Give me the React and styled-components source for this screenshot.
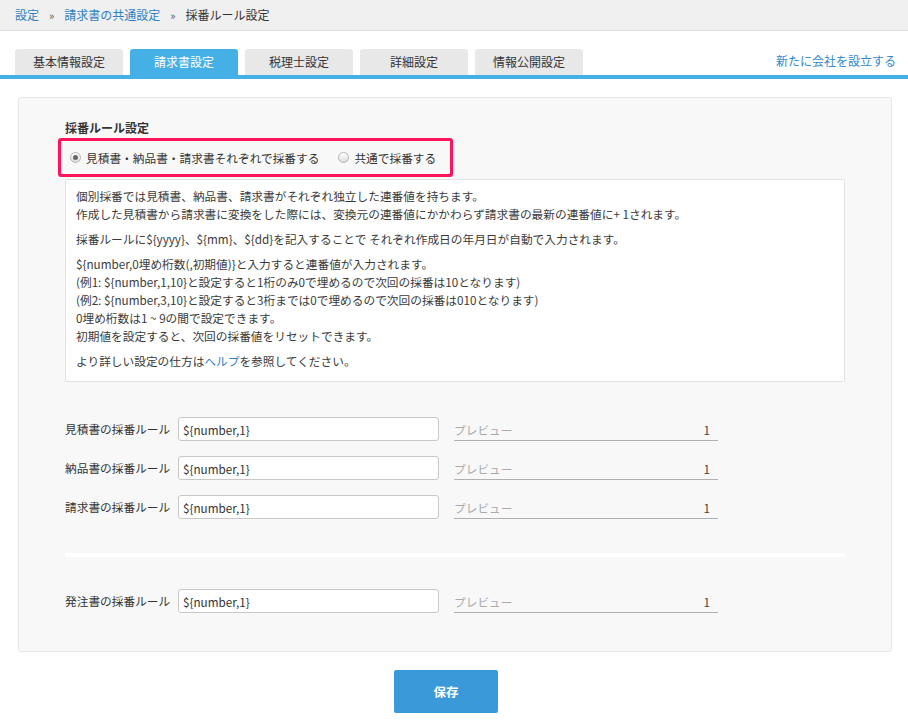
import styled, { createGlobalStyle } from "styled-components";

const GlobalStyle = createGlobalStyle`
  body {
    margin: 0;
    background: #fff;
    color: #333;
    font-family: "Noto Sans CJK JP", "Noto Sans", sans-serif;
    font-size: 12px;
  }
  * { box-sizing: border-box; }
`;

const Breadcrumb = styled.div`
  height: 31px;
  background-color: #f0f0f0;
  border-bottom: 1px solid #dcdcdc;
  display: flex;
  align-items: center;
  padding-left: 15px;
  font-size: 12px;
  line-height: 1;
`;

const Crumb = styled.a`
  color: #2f7fc0;
  text-decoration: none;
`;

const Sep = styled.span`
  margin: 0 10px;
  font-size: 11px;
  color: #555;
`;

const TabBar = styled.div`
  margin-top: 18px;
  display: flex;
  align-items: flex-end;
  gap: 7px;
  padding: 0 12px 0 15px;
  border-bottom: 4px solid #45b0e5;
`;

const Tab = styled.div`
  width: 108px;
  height: 26px;
  display: flex;
  justify-content: center;
  align-items: center;
  border-radius: 3px 3px 0 0;
  font-size: 12px;
  line-height: 1;
  background-color: ${(props) => (props.active ? "#45b0e5" : "#e8e8e8")};
  color: ${(props) => (props.active ? "#fff" : "#333")};
`;

const NewLink = styled.a`
  margin-left: auto;
  align-self: center;
  color: #3088cc;
  font-size: 12px;
  line-height: 1;
  text-decoration: none;
  padding-bottom: 2px;
`;

const Panel = styled.section`
  margin: 18px 16px 0 18px;
  background-color: #f8f8f8;
  border: 1px solid #e6e6e6;
  border-radius: 3px;
  padding: 23px 46px 38px 46px;
`;

const Title = styled.div`
  font-weight: bold;
  font-size: 12px;
  line-height: 14px;
`;

const Highlight = styled.div`
  margin: 3px 0 0 -7px;
  width: 395px;
  height: 39px;
  border: 3px solid #ff1359;
  border-radius: 3px;
  display: flex;
  align-items: center;
  padding-left: 9px;
  font-size: 11.7px;
  line-height: 1;
  white-space: nowrap;
`;

const RadioLabel = styled.label`
  display: flex;
  flex-shrink: 0;
  align-items: center;
  gap: 5px;
  margin-right: 19px;
`;

const RadioDot = styled.span`
  width: 11px;
  height: 11px;
  border-radius: 50%;
  border: 1px solid #b4b4b4;
  background: linear-gradient(#ffffff, #dcdcdc);
  display: flex;
  justify-content: center;
  align-items: center;

  &::after {
    content: "";
    width: 5px;
    height: 5px;
    border-radius: 50%;
    background: ${(props) => (props.checked ? "#666" : "transparent")};
  }
`;

const InfoBox = styled.div`
  margin-top: 2px;
  background: #fff;
  border: 1px solid #e2e2e2;
  border-radius: 2px;
  padding: 7px 10px 4px 10px;
  font-size: 11.7px;
  line-height: 18px;
  color: #3a3a3a;
`;

const Para = styled.p`
  margin: 0 0 7px;
`;

const Help = styled.a`
  color: #2f7fc0;
  text-decoration: none;
`;

const Rows = styled.div`
  margin-top: 35px;
  display: flex;
  flex-direction: column;
  gap: 15px;
`;

const Row = styled.div`
  display: flex;
  align-items: center;
`;

const RowLabel = styled.div`
  width: 105px;
  font-size: 11.7px;
  line-height: 1;
  white-space: nowrap;
  margin-right: 8px;
`;

const Input = styled.input`
  width: 261px;
  height: 24px;
  border: 1px solid #c8c8c8;
  border-radius: 3px;
  padding: 0 4px;
  font-family: "Noto Sans CJK JP", "Noto Sans", sans-serif;
  font-size: 11.7px;
  color: #333;
  background: #fff;
  outline: none;
`;

const Preview = styled.div`
  margin-left: 15px;
  width: 264px;
  height: 24px;
  display: flex;
  justify-content: space-between;
  align-items: center;
  border-bottom: 1px solid #b0b0b0;
  padding: 2px 8px 0 0;
  font-size: 11.7px;
  line-height: 1;
`;

const PreviewLabel = styled.span`
  color: #aaa;
`;

const PreviewValue = styled.span`
  color: #444;
`;

const Divider = styled.hr`
  margin: 34px 0 32px;
  border: none;
  height: 4px;
  background: #fff;
`;

const Footer = styled.div`
  display: flex;
  justify-content: center;
  padding: 18px 16px 0 0;
`;

const SaveBtn = styled.button`
  width: 104px;
  height: 43px;
  border: none;
  border-radius: 2px;
  background-color: #3a9ad9;
  color: #fff;
  font-family: "Noto Sans CJK JP", sans-serif;
  font-weight: bold;
  font-size: 12.5px;
  cursor: pointer;
`;

const tabs = ["基本情報設定", "請求書設定", "税理士設定", "詳細設定", "情報公開設定"];
const rules = ["見積書の採番ルール", "納品書の採番ルール", "請求書の採番ルール"];

const RuleRow = ({ label }) => (
  <Row>
    <RowLabel>{label}</RowLabel>
    <Input defaultValue="${number,1}" />
    <Preview>
      <PreviewLabel>プレビュー</PreviewLabel>
      <PreviewValue>1</PreviewValue>
    </Preview>
  </Row>
);

const App = () => {
  return (
    <>
      <GlobalStyle />
      <Breadcrumb>
        <Crumb href="#">設定</Crumb>
        <Sep>»</Sep>
        <Crumb href="#">請求書の共通設定</Crumb>
        <Sep>»</Sep>
        <span>採番ルール設定</span>
      </Breadcrumb>

      <TabBar>
        {tabs.map((t) => (
          <Tab key={t} active={t === "請求書設定"}>
            {t}
          </Tab>
        ))}
        <NewLink href="#">新たに会社を設立する</NewLink>
      </TabBar>

      <Panel>
        <Title>採番ルール設定</Title>
        <Highlight>
          <RadioLabel>
            <RadioDot checked />
            見積書・納品書・請求書それぞれで採番する
          </RadioLabel>
          <RadioLabel>
            <RadioDot />
            共通で採番する
          </RadioLabel>
        </Highlight>

        <InfoBox>
          <Para>
            個別採番では見積書、納品書、請求書がそれぞれ独立した連番値を持ちます。
            <br />
            作成した見積書から請求書に変換をした際には、変換元の連番値にかかわらず請求書の最新の連番値に+ 1されます。
          </Para>
          <Para>採番ルールに${"{yyyy}"}、${"{mm}"}、${"{dd}"}を記入することで それぞれ作成日の年月日が自動で入力されます。</Para>
          <Para>
            ${"{number,0埋め桁数(,初期値)}"}と入力すると連番値が入力されます。
            <br />
            (例1: ${"{number,1,10}"}と設定すると1桁のみ0で埋めるので次回の採番は10となります)
            <br />
            (例2: ${"{number,3,10}"}と設定すると3桁までは0で埋めるので次回の採番は010となります)
            <br />
            0埋め桁数は1 ~ 9の間で設定できます。
            <br />
            初期値を設定すると、次回の採番値をリセットできます。
          </Para>
          <Para>
            より詳しい設定の仕方は<Help href="#">ヘルプ</Help>を参照してください。
          </Para>
        </InfoBox>

        <Rows>
          {rules.map((r) => (
            <RuleRow key={r} label={r} />
          ))}
        </Rows>

        <Divider />

        <RuleRow label="発注書の採番ルール" />
      </Panel>

      <Footer>
        <SaveBtn>保存</SaveBtn>
      </Footer>
    </>
  );
};

export default App;
